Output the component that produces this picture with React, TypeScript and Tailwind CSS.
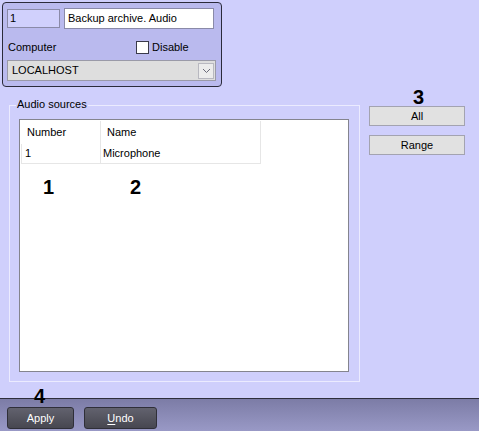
import React from "react";

const font = { fontFamily: '"Liberation Sans", Arial, sans-serif' };

function Callout({ n, className }: { n: string; className: string }) {
  return (
    <span className={`absolute text-[20px] font-bold leading-none text-black ${className}`}>{n}</span>
  );
}

function GreyButton({ label }: { label: string }) {
  return (
    <div className="flex h-[20px] w-[96px] items-center justify-center border border-[#a3a3b0] bg-[#e1e1e1] text-[11px] text-black">
      {label}
    </div>
  );
}

function DarkButton({ children, w }: { children: React.ReactNode; w: string }) {
  return (
    <div
      className={`flex h-[22px] ${w} items-center justify-center rounded-[3px] border border-[#2f2f38] bg-gradient-to-b from-[#62626e] to-[#474750] text-[11px] text-white`}
    >
      {children}
    </div>
  );
}

export default function App() {
  return (
    <div className="relative flex h-[431px] w-[479px] flex-col overflow-hidden bg-[#cfcffc] text-[11px] text-black" style={font}>
      <div className="flex h-[398px] flex-col">
        {/* object panel */}
        <div className="ml-[2px] mt-[2px] flex h-[85px] w-[220px] flex-col rounded-[4px] border border-[#2b2b3a] bg-[#babaee] pl-[4px] pt-[5px]">
          <div className="flex items-center">
            <div className="flex h-[19px] w-[53px] items-center border border-[#8a8aa8] bg-[#d0d0fc] pl-[2px]">1</div>
            <div className="ml-[4px] flex h-[21px] w-[150px] items-center border border-[#8a8aa8] bg-white pl-[3px]">
              Backup archive. Audio
            </div>
          </div>
          <div className="mt-[11px] flex h-[14px] items-center">
            <span className="w-[129px] pl-[1px]">Computer</span>
            <span className="h-[13px] w-[13px] border border-[#3a3a4a] bg-white" />
            <span className="ml-[3px]">Disable</span>
          </div>
          <div className="mt-[6px] flex h-[21px] w-[209px] items-center justify-between border border-[#9a9aa8] bg-[#dedede] pl-[4px] pr-[1px]">
            <span>LOCALHOST</span>
            <span className="flex h-[16px] w-[16px] items-center justify-center border border-[#b8b8c0] bg-[#ececec]">
              <svg width="9" height="6" viewBox="0 0 9 6">
                <path d="M1 1 L4.5 4.5 L8 1" fill="none" stroke="#6a6a78" strokeWidth="1" />
              </svg>
            </span>
          </div>
        </div>

        <div className="mt-[18px] flex">
          {/* group box */}
          <div className="relative ml-[9px] h-[277px] w-[351px] border border-[#ebebff] pl-[9px] pt-[13px]">
            <span className="absolute left-[6px] top-[-8px] bg-[#cfcffc] px-[1px] leading-[13px]">Audio sources</span>
            <div className="h-[253px] w-[330px] border border-[#84848e] bg-white pl-[1px] pt-[1px]">
              <div className="flex h-[23px] w-[240px] items-center">
                <div className="flex h-full w-[80px] items-center border-r border-[#e6e6e6] pl-[6px]">Number</div>
                <div className="flex h-full w-[160px] items-center border-r border-[#e6e6e6] pl-[6px]">Name</div>
              </div>
              <div className="flex h-[20px] w-[240px] items-center border-b border-l border-[#e6e6e6]">
                <div className="flex h-full w-[79px] items-center border-r border-[#e6e6e6] pl-[3px]">1</div>
                <div className="flex h-full w-[160px] items-center border-r border-[#e6e6e6] pl-[2px]">Microphone</div>
              </div>
            </div>
          </div>

          {/* range buttons */}
          <div className="ml-[9px] mt-[1px] flex flex-col gap-[9px]">
            <GreyButton label="All" />
            <GreyButton label="Range" />
          </div>
        </div>
      </div>

      {/* bottom bar */}
      <div className="flex h-[33px] items-start gap-[10px] border-t border-[#2e2e3c] bg-gradient-to-b from-[#7c7ca6] to-[#9999c6] pl-[7px] pt-[8px]">
        <DarkButton w="w-[67px]">Apply</DarkButton>
        <DarkButton w="w-[73px]">
          <span>
            <span className="underline underline-offset-2">U</span>ndo
          </span>
        </DarkButton>
      </div>

      <Callout n="1" className="left-[43px] top-[177px]" />
      <Callout n="2" className="left-[130px] top-[177px]" />
      <Callout n="3" className="left-[413px] top-[87px]" />
      <Callout n="4" className="left-[34px] top-[386px]" />
    </div>
  );
}
